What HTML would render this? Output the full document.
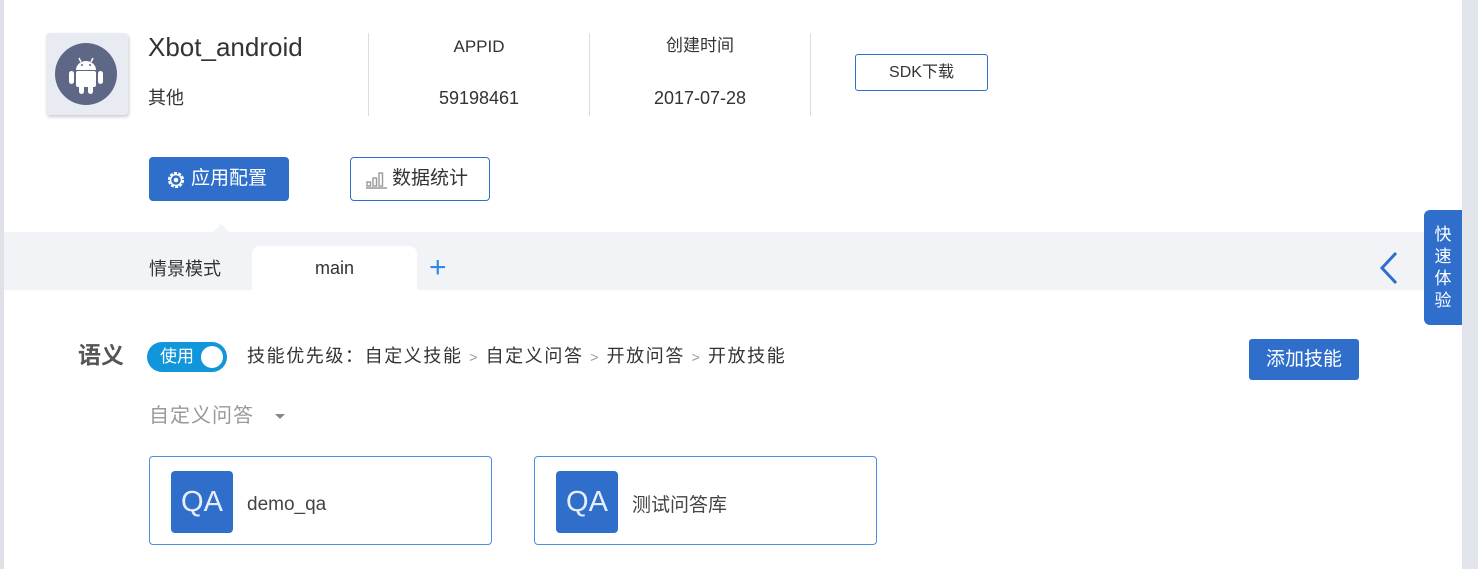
<!DOCTYPE html>
<html><head><meta charset="utf-8"><style>
*{margin:0;padding:0;box-sizing:border-box}
body{width:1478px;height:569px;overflow:hidden;background:#fff;font-family:"Liberation Sans","Noto Sans CJK SC",sans-serif;position:relative;color:#333}
.a{position:absolute;line-height:1.2}
</style></head><body>
<div class="a" style="left:0;top:0;width:4px;height:569px;background:#dfe1e8"></div>
<div class="a" style="left:1462px;top:0;width:16px;height:569px;background:#e3e5ec"></div>
<div class="a" style="left:46px;top:33px;width:82px;height:82px;background:#e9ebf2;border-radius:3px;box-shadow:1px 2px 3px rgba(0,0,0,.2)"></div>
<svg class="a" style="left:55px;top:43px" width="62" height="62" viewBox="0 0 62 62"><circle cx="31" cy="31" r="31" fill="#5f6786"/>
<path d="M21 27a10 9 0 0 1 20 0z" fill="#fff"/><line x1="24" y1="15" x2="26" y2="19" stroke="#fff" stroke-width="1.5"/><line x1="38" y1="15" x2="36" y2="19" stroke="#fff" stroke-width="1.5"/>
<circle cx="27" cy="22" r="1" fill="#5f6786"/><circle cx="35" cy="22" r="1" fill="#5f6786"/>
<rect x="21" y="28" width="20" height="16" rx="2" fill="#fff"/><rect x="14" y="28" width="5" height="13" rx="2.5" fill="#fff"/><rect x="43" y="28" width="5" height="13" rx="2.5" fill="#fff"/>
<rect x="24" y="40" width="5" height="11" rx="2.5" fill="#fff"/><rect x="33" y="40" width="5" height="11" rx="2.5" fill="#fff"/></svg>
<div class="a" style="left:148px;top:32px;font-size:26px;color:#333">Xbot_android</div>
<div class="a" style="left:148px;top:88px;font-size:18px;color:#333">其他</div>
<div class="a" style="left:368px;top:33px;width:1px;height:83px;background:#ddd"></div>
<div class="a" style="left:589px;top:33px;width:1px;height:83px;background:#ddd"></div>
<div class="a" style="left:810px;top:33px;width:1px;height:83px;background:#ddd"></div>
<div class="a" style="left:369px;top:37px;width:220px;text-align:center;font-size:17px">APPID</div>
<div class="a" style="left:369px;top:88px;width:220px;text-align:center;font-size:18px">59198461</div>
<div class="a" style="left:590px;top:36px;width:220px;text-align:center;font-size:17px">创建时间</div>
<div class="a" style="left:590px;top:88px;width:220px;text-align:center;font-size:18px">2017-07-28</div>
<div class="a" style="left:855px;top:54px;width:133px;height:37px;border:1px solid #2f6fcb;border-radius:3px;text-align:center;line-height:35px;font-size:16px">SDK下载</div>
<div class="a" style="left:149px;top:157px;width:140px;height:44px;background:#2f6fcb;border-radius:4px;color:#fff;font-size:19px;line-height:44px;padding-left:42px">应用配置</div>
<svg class="a" style="left:166px;top:170px" width="20" height="20" viewBox="0 0 20 20"><circle cx="10" cy="10" r="7" fill="none" stroke="#fff" stroke-width="2.2" stroke-dasharray="3 1.4"/><circle cx="10" cy="10" r="5.5" fill="none" stroke="#fff" stroke-width="1.5"/><circle cx="10" cy="10" r="2.3" fill="#fff"/></svg>
<div class="a" style="left:350px;top:157px;width:140px;height:44px;border:1px solid #2f6fcb;border-radius:4px;font-size:19px;line-height:42px;padding-left:41px">数据统计</div>
<svg class="a" style="left:366px;top:171px" width="22" height="18" viewBox="0 0 22 18"><g fill="none" stroke="#999" stroke-width="1.4"><rect x="1" y="11" width="3.5" height="4"/><rect x="7" y="7" width="3.5" height="8"/><rect x="13" y="2" width="3.5" height="13"/><line x1="0" y1="17" x2="21" y2="17"/></g></svg>
<div class="a" style="left:4px;top:232px;width:1458px;height:58px;background:#f2f3f7"></div>
<div class="a" style="left:212px;top:224px;width:0;height:0;border-left:9px solid transparent;border-right:9px solid transparent;border-bottom:9px solid #f2f3f7"></div>
<div class="a" style="left:149px;top:259px;font-size:18px">情景模式</div>
<div class="a" style="left:252px;top:246px;width:165px;height:44px;background:#fff;border-radius:8px 8px 0 0;text-align:center;line-height:44px;font-size:18px">main</div>
<div class="a" style="left:429px;top:253px;font-size:30px;color:#2f8ae6;line-height:30px">+</div>
<svg class="a" style="left:1378px;top:250px" width="22" height="36" viewBox="0 0 22 36"><path d="M18 3L4 18l14 15" fill="none" stroke="#2f6fcb" stroke-width="3"/></svg>
<div class="a" style="left:1424px;top:210px;width:38px;height:115px;background:#2f6fcb;border-radius:6px 0 0 6px;color:#fff;font-size:17px;line-height:22px;text-align:center;padding-top:14px">快<br>速<br>体<br>验</div>
<div class="a" style="left:78px;top:342px;font-size:23px;font-weight:bold;color:#555">语义</div>
<div class="a" style="left:147px;top:342px;width:80px;height:30px;background:#1296db;border-radius:15px;color:#fff;font-size:17px;line-height:30px;padding-left:13px">使用</div>
<div class="a" style="left:201px;top:346px;width:22px;height:22px;background:#fff;border-radius:50%"></div>
<div class="a" style="left:247px;top:346px;font-size:18px;color:#333;letter-spacing:1.6px;white-space:nowrap">技能优先级：自定义技能 <span style="color:#999;font-size:14px">&gt;</span> 自定义问答 <span style="color:#999;font-size:14px">&gt;</span> 开放问答 <span style="color:#999;font-size:14px">&gt;</span> 开放技能</div>
<div class="a" style="left:1249px;top:339px;width:110px;height:41px;background:#2f6fcb;border-radius:3px;color:#fff;font-size:19px;line-height:41px;text-align:center">添加技能</div>
<div class="a" style="left:149px;top:404px;font-size:20px;color:#999;letter-spacing:1px">自定义问答</div>
<div class="a" style="left:275px;top:414px;border-left:5px solid transparent;border-right:5px solid transparent;border-top:5px solid #888"></div>
<div class="a" style="left:149px;top:456px;width:343px;height:89px;border:1px solid #4a90e2;border-radius:4px"></div>
<div class="a" style="left:171px;top:471px;width:62px;height:62px;background:#2f6fcb;border-radius:4px;color:#e8eef8;font-size:29px;line-height:62px;text-align:center">QA</div>
<div class="a" style="left:247px;top:494px;font-size:19px;color:#444">demo_qa</div>
<div class="a" style="left:534px;top:456px;width:343px;height:89px;border:1px solid #4a90e2;border-radius:4px"></div>
<div class="a" style="left:556px;top:471px;width:62px;height:62px;background:#2f6fcb;border-radius:4px;color:#e8eef8;font-size:29px;line-height:62px;text-align:center">QA</div>
<div class="a" style="left:632px;top:495px;font-size:19px;color:#444">测试问答库</div>
</body></html>
